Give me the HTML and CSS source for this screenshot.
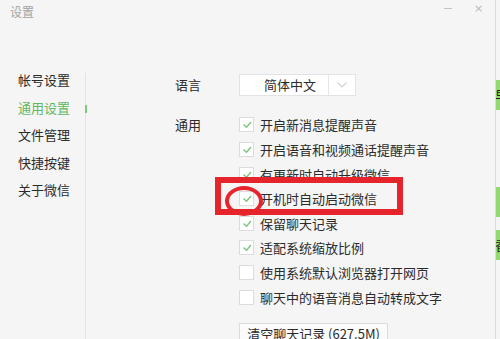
FILE: index.html
```html
<!DOCTYPE html>
<html lang="zh-CN">
<head>
<meta charset="utf-8">
<title>设置</title>
<link rel="stylesheet" href="styles.css">
</head>
<body>
<div class="page">
  <div class="window">
    <header class="titlebar">
      <span class="title">设置</span>
      <div class="controls">
        <span class="ctl min"></span>
        <span class="ctl close">×</span>
      </div>
    </header>
    <div class="body">
      <nav class="sidebar">
        <ul class="nav">
          <li>帐号设置</li>
          <li class="active">通用设置</li>
          <li>文件管理</li>
          <li>快捷按键</li>
          <li>关于微信</li>
        </ul>
        <span class="marker"></span>
      </nav>
      <main class="content">
        <div class="row lang">
          <div class="label">语言</div>
          <div class="select">
            <span class="select-text">简体中文</span>
            <span class="select-btn">
              <svg width="12" height="8" viewBox="0 0 12 8"><polyline points="1.5,1.5 6,6 10.5,1.5" fill="none" stroke="#d2d2d2" stroke-width="1.2"/></svg>
            </span>
          </div>
        </div>
        <div class="row general">
          <div class="label gl">通用</div>
          <ul class="checks">
            <li><span class="box on"><svg width="15" height="15" viewBox="0 0 15 15"><polyline points="4.5,7.5 7.5,10.2 12,5" fill="none" stroke="#7cc47c" stroke-width="1.4"/></svg></span>开启新消息提醒声音</li>
            <li><span class="box on"><svg width="15" height="15" viewBox="0 0 15 15"><polyline points="4.5,7.5 7.5,10.2 12,5" fill="none" stroke="#7cc47c" stroke-width="1.4"/></svg></span>开启语音和视频通话提醒声音</li>
            <li><span class="box on"><svg width="15" height="15" viewBox="0 0 15 15"><polyline points="4.5,7.5 7.5,10.2 12,5" fill="none" stroke="#7cc47c" stroke-width="1.4"/></svg></span>有更新时自动升级微信</li>
            <li><span class="box on"><svg width="15" height="15" viewBox="0 0 15 15"><polyline points="4.5,7.5 7.5,10.2 12,5" fill="none" stroke="#7cc47c" stroke-width="1.4"/></svg></span>开机时自动启动微信</li>
            <li><span class="box on"><svg width="15" height="15" viewBox="0 0 15 15"><polyline points="4.5,7.5 7.5,10.2 12,5" fill="none" stroke="#7cc47c" stroke-width="1.4"/></svg></span>保留聊天记录</li>
            <li><span class="box on"><svg width="15" height="15" viewBox="0 0 15 15"><polyline points="4.5,7.5 7.5,10.2 12,5" fill="none" stroke="#7cc47c" stroke-width="1.4"/></svg></span>适配系统缩放比例</li>
            <li><span class="box"></span>使用系统默认浏览器打开网页</li>
            <li><span class="box"></span>聊天中的语音消息自动转成文字</li>
          </ul>
        </div>
        <button class="clear-btn">清空聊天记录 (627.5M)</button>
      </main>
    </div>
  </div>
  <div class="edge">
    <div class="strip s1"><span>早</span></div>
    <div class="strip s2"></div>
    <div class="strip s3"><span>香</span></div>
  </div>
  <div class="annot-rect"></div>
  <div class="annot-ellipse"></div>
</div>
</body>
</html>
```

FILE: styles.css
```css
* { box-sizing: border-box; }
html, body { margin: 0; padding: 0; }
body {
  width: 500px;
  height: 339px;
  overflow: hidden;
  background: #f5f5f5;
  font-family: "Noto Sans CJK SC", "Noto Sans", sans-serif;
  color: #2b2b2b;
}
.page {
  position: relative;
  display: flex;
  width: 500px;
  height: 339px;
}
.window {
  width: 496px;
  height: 339px;
  border-right: 1px solid #dcdcdc;
  background: #f5f5f5;
  display: flex;
  flex-direction: column;
}
.titlebar {
  height: 73px;
  flex: none;
  display: flex;
  justify-content: space-between;
  align-items: flex-start;
}
.title {
  padding-left: 10px;
  line-height: 24px;
  font-size: 12px;
  color: #a3a3a3;
}
.controls {
  display: flex;
  padding-right: 1px;
}
.ctl {
  width: 31px;
  height: 16px;
  display: flex;
  align-items: center;
  justify-content: center;
  color: #b8b8b8;
  font-family: "DejaVu Sans", sans-serif;
  font-size: 11px;
}
.min::before {
  content: "";
  display: block;
  width: 8px;
  height: 1px;
  background: #c4c4c4;
}
.body {
  flex: 1;
  display: flex;
}
.sidebar {
  position: relative;
  width: 86px;
  border-right: 1px solid #e4e4e4;
  flex: none;
}
.nav {
  list-style: none;
  margin: -7px 0 0 0;
  padding: 0 0 0 18px;
}
.nav li {
  height: 27.5px;
  line-height: 27.5px;
  font-size: 13px;
  color: #2b2b2b;
}
.nav li.active { color: #5fb85f; }
.marker {
  position: absolute;
  right: -1.5px;
  top: 32px;
  width: 2px;
  height: 8px;
  background: #7ccb7c;
}
.content {
  flex: 1;
  padding: 1px 0 0 89px;
  display: flex;
  flex-direction: column;
  align-items: flex-start;
}
.row { display: flex; }
.label {
  width: 64px;
  font-size: 13px;
  line-height: 22px;
  color: #2b2b2b;
}
.label.gl { line-height: 24.6px; }
.lang { margin-bottom: 16.7px; }
.select {
  width: 117px;
  height: 22px;
  display: flex;
  border: 1px solid #e3e3e3;
  background: #ffffff;
}
.select-text {
  width: 89px;
  text-align: center;
  font-size: 13px;
  line-height: 20px;
  padding-left: 12px;
  border-right: 1px solid #e6e6e6;
}
.select-btn {
  flex: 1;
  display: flex;
  align-items: center;
  justify-content: center;
}
.checks {
  list-style: none;
  margin: 0;
  padding: 0;
}
.checks li {
  height: 24.6px;
  display: flex;
  align-items: center;
  gap: 6px;
  font-size: 13px;
  color: #2b2b2b;
  white-space: nowrap;
}
.box {
  width: 15px;
  height: 15px;
  flex: none;
  border: 1px solid #dcdcdc;
  background: #ffffff;
  position: relative;
}
.box svg {
  position: absolute;
  left: -1px;
  top: -1px;
}
.clear-btn {
  margin: 13.5px 0 0 64px;
  width: 149px;
  height: 27px;
  border: 1px solid #dcdcdc;
  background: #fbfbfb;
  font-family: "Noto Sans CJK SC", "Noto Sans", sans-serif;
  font-size: 13px;
  line-height: 18px;
  color: #2b2b2b;
  padding: 1px 0 7px 0;
  text-align: center;
}
.edge {
  width: 4px;
  display: flex;
  flex-direction: column;
  background: #f5f5f5;
}
.strip {
  height: 30px;
  background: #93d870;
  overflow: hidden;
  font-size: 13px;
  line-height: 30px;
  color: #222;
}
.strip span { display: block; margin-left: -1px; }
.s1 { margin-top: 80px; }
.s2 { margin-top: 77px; }
.s3 { margin-top: 13px; }
.annot-rect {
  position: absolute;
  left: 215px;
  top: 177px;
  width: 188px;
  height: 38px;
  border: 6.5px solid #e5242b;
}
.annot-ellipse {
  position: absolute;
  left: 225px;
  top: 186px;
  width: 38px;
  height: 30px;
  border: 4px solid #e5242b;
  border-radius: 50%;
}
```
